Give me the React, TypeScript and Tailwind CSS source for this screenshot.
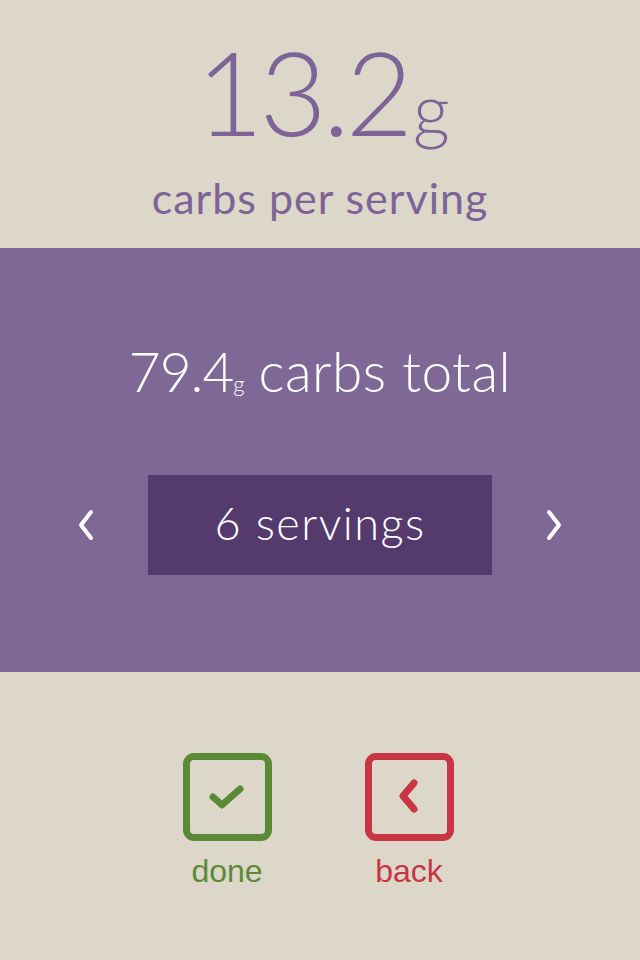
import React from 'react';

const sans = "font-['Lato','Open_Sans',sans-serif]";

const Chevron: React.FC<{ dir: 'left' | 'right' }> = ({ dir }) => (
  <svg width="22" height="36" viewBox="0 0 22 36" fill="none">
    <path
      d={dir === 'left' ? 'M16 5 L6 18 L16 31' : 'M6 5 L16 18 L6 31'}
      stroke="white"
      strokeWidth="4"
      strokeLinecap="round"
      strokeLinejoin="round"
    />
  </svg>
);

type ActionProps = {
  label: string;
  color: string;
  icon: React.ReactNode;
};

const ActionButton: React.FC<ActionProps> = ({ label, color, icon }) => (
  <div className="flex flex-col items-center w-[120px]">
    <div
      className="w-[89px] h-[88px] rounded-[11px] border-[7px] flex items-center justify-center"
      style={{ borderColor: color }}
    >
      {icon}
    </div>
    <span
      className="mt-[12px] text-[32px] leading-[36px] font-['Liberation_Sans',Arial,sans-serif]"
      style={{ color }}
    >
      {label}
    </span>
  </div>
);

export default function App() {
  return (
    <div className={`w-[640px] h-[960px] bg-[#ddd7ca] flex flex-col ${sans}`}>
      {/* per serving */}
      <div className="h-[248px] flex flex-col items-center text-[#7d6398]">
        <div className="mt-[34px] ml-[6px] flex items-baseline font-light leading-none">
          <span className="text-[116px] tracking-[-4px]">13.2</span>
          <span className="text-[72px] ml-[4px]">g</span>
        </div>
        <div className="mt-[26px] text-[43px] leading-none tracking-[1px]">carbs per serving</div>
      </div>

      {/* totals + servings picker */}
      <div className="h-[424px] bg-[#7f6796] flex flex-col items-center">
        <div className="mt-[96px] flex items-baseline text-white font-light leading-none text-[55px]">
          <span className="tracking-[-1px]">79.4</span>
          <span className="text-[22px]">g</span>
          <span className="ml-[14px] tracking-[0.5px]">carbs total</span>
        </div>
        <div className="mt-[76px] w-full flex items-center justify-between px-[75px]">
          <Chevron dir="left" />
          <div className="w-[344px] h-[100px] bg-[#553a6e] flex items-center justify-center text-white text-[45px] font-light tracking-[1.5px] pb-[2px]">
            6 servings
          </div>
          <Chevron dir="right" />
        </div>
      </div>

      {/* actions */}
      <div className="flex justify-center gap-[62px] mt-[81px] mr-[4px]">
        <ActionButton
          label="done"
          color="#5a8a35"
          icon={
            <svg width="40" height="30" viewBox="0 0 40 30" fill="none">
              <path d="M6 15 L15 23 L33 7" stroke="#5a8a35" strokeWidth="7" strokeLinecap="round" strokeLinejoin="round" />
            </svg>
          }
        />
        <ActionButton
          label="back"
          color="#c83545"
          icon={
            <svg width="28" height="40" viewBox="0 0 28 40" fill="none">
              <path d="M19 6 L8 19 L19 32" stroke="#c83545" strokeWidth="7" strokeLinecap="round" strokeLinejoin="round" />
            </svg>
          }
        />
      </div>
    </div>
  );
}
